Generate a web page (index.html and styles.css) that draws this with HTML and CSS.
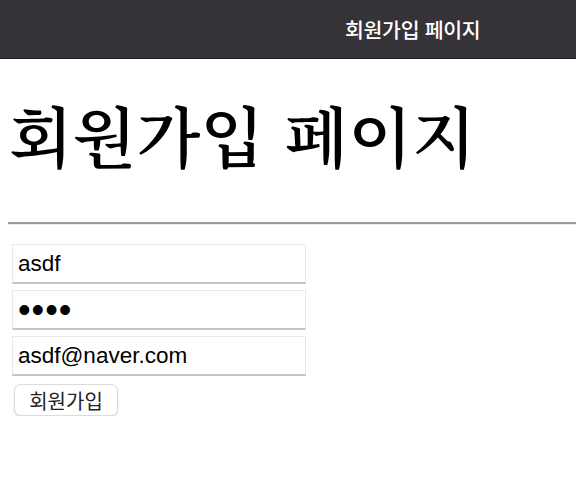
FILE: index.html
```html
<!DOCTYPE html>
<html lang="ko">
<head>
    <meta charset="UTF-8">
    <meta name="viewport" content="width=device-width, initial-scale=1.0">
    <title>회원가입 페이지</title>
    <link rel="stylesheet" href="styles.css">
</head>
<body>
    <header class="top-bar">
        <span class="top-bar-title">회원가입 페이지</span>
    </header>

    <main class="page">
        <h1 class="page-title">회원가입 페이지</h1>
        <hr class="divider">

        <form class="join-form">
            <input class="field" type="text" name="username" value="asdf">
            <input class="field field-password" type="password" name="password" value="asdf">
            <input class="field" type="email" name="email" value="asdf@naver.com">
            <button class="join-btn" type="submit">회원가입</button>
        </form>
    </main>
</body>
</html>
```

FILE: styles.css
```css
body {
    margin: 0;
    background-color: #fff;
    color: #000;
    font-family: "Liberation Sans", "Noto Sans CJK KR", sans-serif;
    overflow-x: hidden;
}

/* 상단 바 */
.top-bar {
    height: 58px;
    background-color: #353338;
    border-bottom: 1px solid #1e1d20;
    display: flex;
    align-items: center;
    padding-left: 345px;
}

.top-bar-title {
    color: #fff;
    font-family: "Noto Sans CJK KR", sans-serif;
    font-size: 20.5px;
    font-weight: 500;
    letter-spacing: -0.3px;
}

.page {
    padding: 0 0 0 8px;
}

/* 큰 제목 */
.page-title {
    margin: 35px 0 48px 1px;
    font-family: "Noto Serif CJK KR", "Noto Sans CJK KR", serif;
    font-size: 66px;
    line-height: 80px;
    font-weight: 600;
}

.divider {
    margin: 0;
    border: 0;
    border-top: 2px solid #9a9a9a;
    border-bottom: 1px solid #ececec;
}

/* 입력 폼 */
.join-form {
    display: flex;
    flex-direction: column;
    align-items: flex-start;
    gap: 6px;
    padding: 19px 0 0 4px;
}

.field {
    box-sizing: border-box;
    width: 294px;
    height: 40px;
    margin: 0;
    padding: 0 5px;
    border: 1px solid #e8e8e8;
    border-bottom: 2px solid #c4c4c4;
    font-family: "Liberation Sans", sans-serif;
    font-size: 22.5px;
    color: #000;
    background: #fff;
    outline: none;
}

.field-password {
    font-size: 36px;
    letter-spacing: 1px;
}

.join-btn {
    margin: 2px 0 0 2px;
    width: 104px;
    height: 32px;
    background: #fff;
    border: 1px solid #dcdcdc;
    border-radius: 7px;
    box-shadow: 0 1px 2px rgba(0, 0, 0, 0.15);
    font-family: "Noto Sans CJK KR", sans-serif;
    font-size: 20px;
    color: #222;
    padding: 0;
}
```
